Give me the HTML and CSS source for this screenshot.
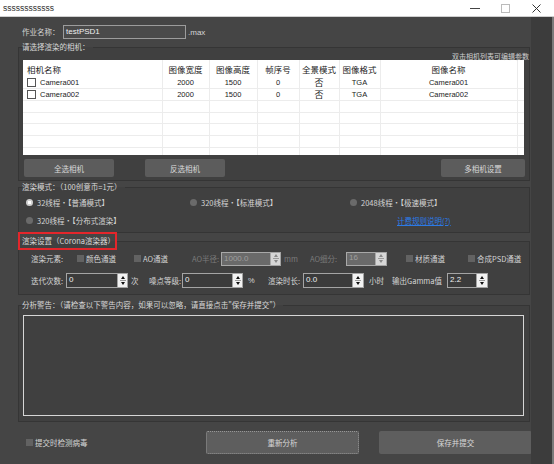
FILE: index.html
```html
<!DOCTYPE html>
<html lang="zh-CN">
<head>
<meta charset="utf-8">
<title>ssssssssssss</title>
<link rel="stylesheet" href="styles.css">
</head>
<body>
<div class="titlebar">
  <span class="title">ssssssssssss</span>
  <div class="winctl">
    <svg class="ctl ctl-min" width="10" height="9" viewBox="0 0 10 9"><line x1="0" y1="4.5" x2="10" y2="4.5" stroke="#444" stroke-width="1"/></svg>
    <svg class="ctl ctl-max" width="9" height="9" viewBox="0 0 9 9"><rect x="0.5" y="0.5" width="8" height="8" fill="none" stroke="#bbb" stroke-width="1"/></svg>
    <svg class="ctl ctl-close" width="9" height="9" viewBox="0 0 9 9"><path d="M0.5 0.5 L8.5 8.5 M8.5 0.5 L0.5 8.5" stroke="#333" stroke-width="1"/></svg>
  </div>
</div>
<div class="frame">
  <div class="main">
    <div class="jobrow">
      <span class="joblabel">作业名称：</span>
      <div class="jobinput">testPSD1</div>
      <span class="ext">.max</span>
    </div>

    <fieldset class="group cam">
      <legend>请选择渲染的相机：</legend>
      <div class="note">双击相机列表可编辑参数</div>
      <div class="tablewrap">
        <table class="cams">
          <colgroup>
            <col style="width:139px"><col style="width:47px"><col style="width:48px"><col style="width:42px"><col style="width:40px"><col style="width:41px"><col style="width:137px"><col style="width:7px">
          </colgroup>
          <thead>
            <tr class="hd"><th class="c-name">相机名称</th><th>图像宽度</th><th>图像高度</th><th>帧序号</th><th>全景模式</th><th>图像格式</th><th>图像名称</th><th></th></tr>
          </thead>
          <tbody>
            <tr><td class="c-name"><span class="cb"></span>Camera001</td><td>2000</td><td>1500</td><td>0</td><td class="cjk">否</td><td>TGA</td><td>Camera001</td><td></td></tr>
            <tr><td class="c-name"><span class="cb"></span>Camera002</td><td>2000</td><td>1500</td><td>0</td><td class="cjk">否</td><td>TGA</td><td>Camera002</td><td></td></tr>
            <tr><td></td><td></td><td></td><td></td><td></td><td></td><td></td><td></td></tr>
            <tr><td></td><td></td><td></td><td></td><td></td><td></td><td></td><td></td></tr>
            <tr><td></td><td></td><td></td><td></td><td></td><td></td><td></td><td></td></tr>
            <tr><td></td><td></td><td></td><td></td><td></td><td></td><td></td><td></td></tr>
            <tr><td></td><td></td><td></td><td></td><td></td><td></td><td></td><td></td></tr>
          </tbody>
        </table>
      </div>
      <div class="btnrow">
        <div class="btn b-all">全选相机</div>
        <div class="btn b-inv">反选相机</div>
        <div class="btn b-multi">多相机设置</div>
      </div>
    </fieldset>

    <fieldset class="group mode">
      <legend>渲染模式：（100创意币=1元）</legend>
      <div class="modes">
        <div class="opt"><span class="radio on"></span>32线程·【普通模式】</div>
        <div class="opt"><span class="radio"></span>320线程·【标准模式】</div>
        <div class="opt"><span class="radio"></span>2048线程·【极速模式】</div>
        <div class="opt"><span class="radio"></span>320线程·【分布式渲染】</div>
        <div class="opt"></div>
        <div class="opt"><span class="link">计费规则说明(?)</span></div>
      </div>
    </fieldset>

    <fieldset class="group corona">
      <legend class="redbox">渲染设置（Corona渲染器）</legend>
      <div class="crow r1">
        <span class="lbl w-elem">渲染元素:</span>
        <span class="chk"></span><span class="lbl w-color">颜色通道</span>
        <span class="chk"></span><span class="lbl w-ao">AO通道</span>
        <span class="lbl dis w-aor">AO半径:</span>
        <div class="num dis"><div class="field f-aor">1000.0</div><div class="spin"><i class="up"></i><b></b><i class="dn"></i></div></div>
        <span class="lbl dis w-mm">mm</span>
        <span class="lbl dis w-aos">AO细分:</span>
        <div class="num dis"><div class="field f-aos">16</div><div class="spin sp11"><i class="up"></i><b></b><i class="dn"></i></div></div>
        <span class="chk c-mat"></span><span class="lbl w-mat">材质通道</span>
        <span class="chk"></span><span class="lbl">合成PSD通道</span>
      </div>
      <div class="crow r2">
        <span class="lbl w-iter">迭代次数:</span>
        <div class="num"><div class="field f-iter">0</div><div class="spin"><i class="up"></i><b></b><i class="dn"></i></div></div>
        <span class="lbl w-ci">次</span>
        <span class="lbl w-noise">噪点等级:</span>
        <div class="num"><div class="field f-noise">0</div><div class="spin"><i class="up"></i><b></b><i class="dn"></i></div></div>
        <span class="lbl w-pct">%</span>
        <span class="lbl w-time">渲染时长:</span>
        <div class="num"><div class="field f-time">0.0</div><div class="spin sp11"><i class="up"></i><b></b><i class="dn"></i></div></div>
        <span class="lbl w-hour">小时</span>
        <span class="lbl w-gamma">输出Gamma值</span>
        <div class="num"><div class="field f-gamma">2.2</div><div class="spin sp11"><i class="up"></i><b></b><i class="dn"></i></div></div>
      </div>
    </fieldset>

    <fieldset class="group warn">
      <legend>分析警告：（请检查以下警告内容，如果可以忽略，请直接点击"保存并提交"）</legend>
      <div class="warnbox"></div>
    </fieldset>

    <div class="bottom">
      <span class="chk"></span><span class="lbl">提交时检测病毒</span>
      <div class="btn big b-re">重新分析</div>
      <div class="btn big b-save">保存并提交</div>
    </div>
  </div>
  <div class="side"></div>
</div>
</body>
</html>
```

FILE: styles.css
```css
* { box-sizing: border-box; }
html, body { margin: 0; padding: 0; }
body {
  width: 554px;
  height: 464px;
  overflow: hidden;
  background: #454545;
  font-family: "Noto Sans CJK SC", "Liberation Sans", sans-serif;
  font-size: 7.5px;
  color: #d4d4d4;
}

/* title bar */
.titlebar {
  height: 17px;
  background: #fff;
  border-bottom: 1px solid #cfcfcf;
  display: flex;
  align-items: center;
  padding-left: 3px;
}
.title {
  font-family: "Liberation Sans", sans-serif;
  font-size: 8.5px;
  color: #333;
  line-height: 1;
}
.winctl {
  margin-left: auto;
  display: flex;
  align-items: center;
  padding-right: 13px;
}
.ctl { display: block; }
.ctl-max { margin-left: 21px; }
.ctl-close { margin-left: 22px; }

.frame { display: flex; height: 447px; }
.main { width: 531px; padding: 0 1px 0 18px; }
.side { flex: 1; background: #3c3c3c; border-right: 2px solid #7a7a7a; }

/* job row */
.jobrow {
  display: flex;
  align-items: center;
  height: 14px;
  margin-top: 8px;
  padding-left: 4px;
}
.joblabel { width: 41px; line-height: 14px; }
.jobinput {
  width: 123px;
  height: 14px;
  border: 1px solid #9c9c9c;
  background: #4a4a4a;
  color: #f0f0f0;
  font-family: "Liberation Sans", sans-serif;
  font-size: 8px;
  line-height: 12px;
  padding-left: 2px;
}
.ext {
  margin-left: 2px;
  font-family: "Liberation Sans", sans-serif;
  font-size: 8px;
}

/* group boxes */
fieldset.group {
  margin: 0;
  min-width: 0;
  border: 1px solid #353535;
  background: #404040;
  padding: 0 5px 0 4px;
}
fieldset.group > legend {
  padding: 0 3px 0 0;
  margin-left: -1px;
  height: 10px;
  line-height: 10px;
  font-size: 7.5px;
  color: #d8d8d8;
}
.cam { margin-top: 3px !important; padding-bottom: 3px !important; }

.note {
  height: 8px;
  line-height: 8px;
  font-size: 7px;
  text-align: right;
  margin-right: -5px;
  color: #cfcfcf;
}

.tablewrap {
  width: 501px;
  height: 95px;
  overflow: hidden;
  background: #fff;
}
.cams {
  width: 501px;
  table-layout: fixed;
  border-collapse: collapse;
  font-family: "Liberation Sans", sans-serif;
  font-size: 7.5px;
  color: #222;
}
.cams th, .cams td {
  padding: 0;
  border-left: 1px solid #ececec;
  text-align: center;
  white-space: nowrap;
  overflow: hidden;
}
.cams th:first-child, .cams td:first-child { border-left: none; }
.cams th {
  height: 17px;
  font-family: "Noto Sans CJK SC", sans-serif;
  font-size: 8.5px;
  font-weight: normal;
  color: #222;
}
.cams tbody tr { height: 11.7px; }
.cams tbody td { border-bottom: 1px solid #ececec; line-height: 10px; }
.cams .c-name { text-align: left; padding-left: 4px; }
.cams .cjk { font-family: "Noto Sans CJK SC", sans-serif; font-size: 9px; }
.cb {
  display: inline-block;
  width: 9px;
  height: 9px;
  border: 1px solid #555;
  background: #fff;
  vertical-align: middle;
  margin-right: 4px;
  margin-top: -1px;
}

.btnrow { display: flex; margin-top: 4px; }
.btn {
  height: 18px;
  background: #5c5c5c;
  border-radius: 2px;
  color: #d8d8d8;
  display: flex;
  align-items: center;
  justify-content: center;
  font-size: 7.5px;
}
.b-all { margin-left: 1px; width: 90px; }
.b-inv { margin-left: 31px; width: 80px; }
.b-multi { margin-left: auto; width: 84px; margin-right: -1px; }

/* render mode */
.mode { margin-top: 1px !important; padding-bottom: 5px !important; }
.modes {
  display: grid;
  grid-template-columns: 164px 160px 1fr;
  grid-auto-rows: 14px;
  row-gap: 4px;
  margin-top: 3px;
}
.opt { display: flex; align-items: center; padding-left: 3px; white-space: nowrap; }
.radio {
  width: 7px;
  height: 7px;
  border-radius: 50%;
  background: #6a6a6a;
  margin-right: 4px;
  flex: none;
}
.radio.on { background: radial-gradient(circle, #ffffff 0 1.5px, #d0d0d0 2px); }
.link { color: #2b7be6; text-decoration: underline; padding-left: 47px; }

/* corona */
.corona { margin-top: -1px !important; padding-bottom: 6px !important; }
fieldset.group > legend.redbox {
  margin-left: -5px;
  width: 99px;
  height: 18px;
  line-height: 14px;
  border: 2px solid #e3262b;
  padding: 0 0 0 2px;
  white-space: nowrap;
}
.crow { display: flex; align-items: center; height: 15px; white-space: nowrap; }
.r1 { margin-top: 1px; }
.r2 { margin-top: 7px; }
.lbl { line-height: 15px; }
.dis.lbl { color: #7c7c7c; }
.chk {
  width: 7px;
  height: 7px;
  background: #626262;
  margin-right: 2px;
  flex: none;
}
.w-elem { margin-left: 8px; width: 46px; }
.w-color { width: 48px; }
.w-ao { width: 49px; }
.w-aor { width: 29px; }
.w-mm { margin-left: 3px; width: 26px; }
.w-aos { width: 36px; }
.c-mat { margin-left: 19px; }
.w-mat { width: 53px; }

.w-iter { margin-left: 8px; width: 35px; }
.w-ci { margin-left: 3px; width: 18px; }
.w-noise { width: 33px; }
.w-pct { margin-left: 5px; width: 20px; font-family: "Liberation Sans", sans-serif; }
.w-time { width: 35px; }
.w-hour { margin-left: 5px; width: 23px; }
.w-gamma { width: 55px; }

.num { display: flex; height: 15px; }
.r1 .num { height: 14px; }
.field {
  border: 1px solid #a4a4a4;
  background: #3b3b3b;
  color: #eeeeee;
  font-family: "Liberation Sans", sans-serif;
  font-size: 8px;
  line-height: 12px;
  padding-left: 2px;
}
.num.dis .field { background: #6a6a6a; color: #9e9e9e; border-color: #a8a8a8; }
.f-aor { width: 50px; }
.f-aos { width: 30px; line-height: 9px; }
.f-iter { width: 52px; }
.f-noise { width: 51px; }
.f-time { width: 50px; }
.f-gamma { width: 30px; }
.spin {
  width: 10px;
  border: 1px solid #a4a4a4;
  border-left: none;
  background: #f2f2f2;
  display: flex;
  flex-direction: column;
  align-items: center;
  justify-content: center;
  gap: 1px;
}
.spin.sp11 { width: 11px; }
.spin i { display: block; width: 0; height: 0; border-left: 2.5px solid transparent; border-right: 2.5px solid transparent; }
.spin i.up { border-bottom: 3px solid #111; }
.spin i.dn { border-top: 3px solid #111; }
.spin b { display: block; width: 6px; height: 1px; background: #9a9a9a; }
.num.dis .spin { background: #d6d6d6; }
.num.dis .spin i.up { border-bottom-color: #888; }
.num.dis .spin i.dn { border-top-color: #888; }

/* warnings */
.warn { margin-top: 5px !important; padding-bottom: 5px !important; }
.warnbox {
  margin-top: 5px;
  width: 501px;
  height: 101px;
  border: 1px solid #d6d6d6;
}

/* bottom */
.bottom {
  display: flex;
  align-items: center;
  height: 23px;
  margin-top: 9px;
  padding-left: 8px;
  margin-right: -2px;
}
.bottom .chk { margin-right: 2px; }
.btn.big { height: 23px; width: 153px; background: #5e5e5e; }
.b-re { margin-left: auto; border: 1px dotted #969696; }
.b-save { margin-left: 20px; }
```
